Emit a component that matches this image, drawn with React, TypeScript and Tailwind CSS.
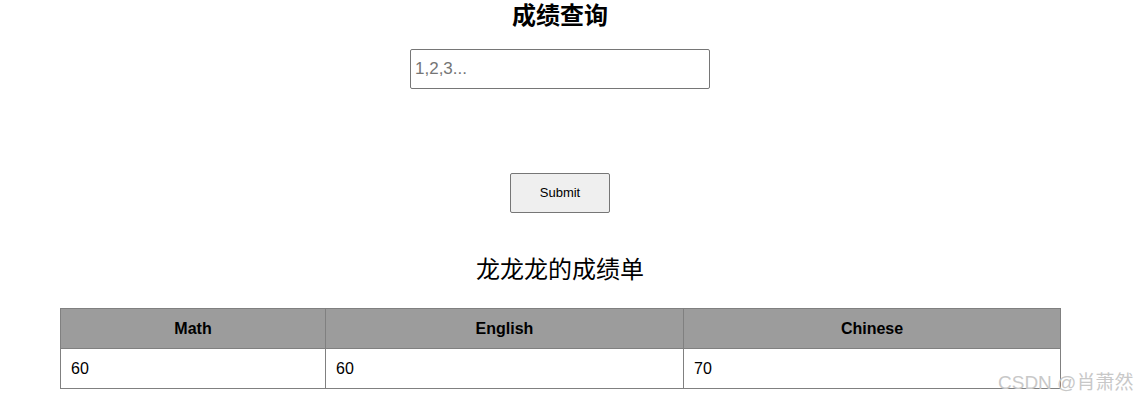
export default function App() {
  const scores = [{ math: 60, english: 60, chinese: 70 }];

  return (
    <div className="relative w-[1120px] h-[402px] bg-white text-black font-['Liberation_Sans','Noto_Sans_CJK_SC',sans-serif]">
      <div className="flex flex-col items-center">
        <h2 className="mt-[1px] h-[30px] text-[24px] font-bold leading-[30px]">成绩查询</h2>
        <input
          placeholder="1,2,3..."
          className="mt-[18px] w-[300px] h-[40px] px-[4px] border border-[#767676] rounded-[2px] text-[17px] placeholder:text-[#757575] outline-none"
        />
        <button className="mt-[84px] w-[100px] h-[40px] bg-[#efefef] border border-[#767676] rounded-[2px] text-[13px]">
          Submit
        </button>
        <h3 className="mt-[42px] h-[30px] text-[24px] leading-[30px]">龙龙龙的成绩单</h3>
      </div>

      <table className="mt-[23px] ml-[60px] w-[1000px] table-fixed border-collapse text-[16px]">
        <colgroup>
          <col className="w-[265px]" />
          <col className="w-[358px]" />
          <col className="w-[377px]" />
        </colgroup>
        <thead>
          <tr className="h-[40px] bg-[#9c9c9c]">
            <th className="border border-[#808080] font-bold text-center">Math</th>
            <th className="border border-[#808080] font-bold text-center">English</th>
            <th className="border border-[#808080] font-bold text-center">Chinese</th>
          </tr>
        </thead>
        <tbody>
          {scores.map((s, i) => (
            <tr key={i} className="h-[40px]">
              <td className="border border-[#808080] px-[10px]">{s.math}</td>
              <td className="border border-[#808080] px-[10px]">{s.english}</td>
              <td className="border border-[#808080] px-[10px]">{s.chinese}</td>
            </tr>
          ))}
        </tbody>
      </table>

      <div className="absolute left-[998px] top-[369px] text-[19px] text-[#c8c8c8] whitespace-nowrap">
        CSDN @肖萧然
      </div>
    </div>
  );
}
